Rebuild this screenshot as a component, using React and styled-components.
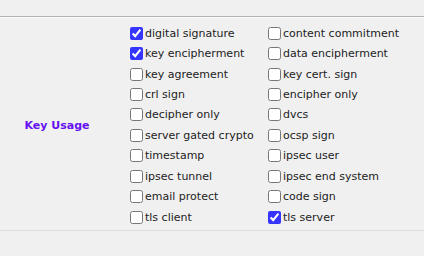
import React from "react";
import styled, { createGlobalStyle } from "styled-components";

const Global = createGlobalStyle`
  html, body { margin: 0; padding: 0; background: #f0f0f0; }
  body { font-family: "DejaVu Sans", Verdana, sans-serif; font-size: 11px; color: #222; }
`;

const Page = styled.div`
  width: 424px;
  height: 256px;
  padding-top: 16px;
  box-sizing: border-box;
`;

const Rule = styled.div`
  height: 0;
  border-top: 1px solid #b2b2b2;
  border-bottom: 1px solid #fbfbfb;
`;

const FieldRow = styled.div`
  display: grid;
  grid-template-columns: 114px 1fr;
  border-bottom: 1px solid #dcdcdc;
  padding: 5px 0 3px;
`;

const Label = styled.div`
  display: flex;
  align-items: center;
  justify-content: center;
  font-weight: bold;
  color: #6610f2;
`;

const Options = styled.div`
  display: grid;
  grid-template-columns: 138px 138px;
  grid-auto-rows: 20.44px;
  padding-left: 16px;
`;

const Option = styled.label`
  display: flex;
  align-items: center;
  gap: 2px;
  white-space: nowrap;
  line-height: 13px;
`;

const Box = styled.input.attrs({ type: "checkbox" })`
  width: 13px;
  height: 13px;
  margin: 0;
  accent-color: #3535ff;
  flex: none;
`;

const items = [
  ["digital signature", true],
  ["content commitment", false],
  ["key encipherment", true],
  ["data encipherment", false],
  ["key agreement", false],
  ["key cert. sign", false],
  ["crl sign", false],
  ["encipher only", false],
  ["decipher only", false],
  ["dvcs", false],
  ["server gated crypto", false],
  ["ocsp sign", false],
  ["timestamp", false],
  ["ipsec user", false],
  ["ipsec tunnel", false],
  ["ipsec end system", false],
  ["email protect", false],
  ["code sign", false],
  ["tls client", false],
  ["tls server", true],
];

export default function App() {
  return (
    <Page>
      <Global />
      <Rule />
      <FieldRow>
        <Label>Key Usage</Label>
        <Options>
          {items.map(([name, checked]) => (
            <Option key={name}>
              <Box defaultChecked={checked} />
              <span>{name}</span>
            </Option>
          ))}
        </Options>
      </FieldRow>
    </Page>
  );
}
